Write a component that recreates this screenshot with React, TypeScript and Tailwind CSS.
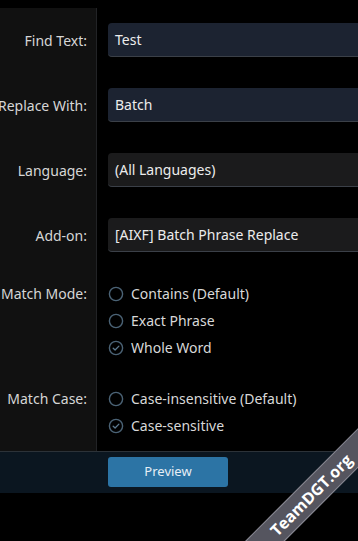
import React from 'react';

function RadioIcon({ checked }: { checked: boolean }) {
  return (
    <svg width="16" height="16" viewBox="0 0 16 16" className="shrink-0">
      <circle cx="8" cy="8" r="6.6" fill="none" stroke="#4b6376" strokeWidth="1.4" />
      {checked && (
        <path d="M5.2 8.2 L7.1 10 L10.9 6.1" fill="none" stroke="#5d7a90" strokeWidth="1.3" strokeLinecap="round" strokeLinejoin="round" />
      )}
    </svg>
  );
}

function Row({ label, children, top = false, className = '' }: { label: string; children: React.ReactNode; top?: boolean; className?: string }) {
  return (
    <div className="flex">
      <div className={`w-[97px] shrink-0 bg-[#111111] border-r border-[#222326] pr-[9px] flex justify-end whitespace-nowrap overflow-hidden ${top ? 'items-start' : 'items-center'} ${className}`}>
        <span className={`text-[14px] text-[#d6d6d6] ${top ? 'leading-[27px]' : ''}`}>{label}</span>
      </div>
      <div className={`flex-1 pl-[11px] min-w-0 ${className}`}>{children}</div>
    </div>
  );
}

function Field({ value, tone }: { value: string; tone: 'blue' | 'gray' }) {
  return (
    <div
      className={`h-[34px] w-[270px] rounded-[4px] border-b border-[#3b4048] flex items-center pl-[7px] text-[14px] text-[#ececec] ${
        tone === 'blue' ? 'bg-[#1c2331]' : 'bg-[#1b1b1c]'
      }`}
    >
      {value}
    </div>
  );
}

function Radio({ label, checked = false }: { label: string; checked?: boolean }) {
  return (
    <div className="h-[27px] flex items-center gap-[7px]">
      <RadioIcon checked={checked} />
      <span className="text-[14px] text-[#d8d8d8]">{label}</span>
    </div>
  );
}

export default function App() {
  return (
    <div className="relative w-[358px] h-[541px] bg-black overflow-hidden" style={{ fontFamily: '"Noto Sans", "Open Sans", sans-serif' }}>
      <div className="h-[8px]" />

      <Row label="Find Text:" className="py-[15px] h-[65px]">
        <Field value="Test" tone="blue" />
      </Row>
      <Row label="Replace With:" className="py-[15px] h-[65px]">
        <Field value="Batch" tone="blue" />
      </Row>
      <Row label="Language:" className="py-[15px] h-[65px]">
        <Field value="(All Languages)" tone="gray" />
      </Row>
      <Row label="Add-on:" className="py-[15px] h-[65px]">
        <Field value="[AIXF] Batch Phrase Replace" tone="gray" />
      </Row>

      <Row label="Match Mode:" top className="py-[12px]">
        <Radio label="Contains (Default)" />
        <Radio label="Exact Phrase" />
        <Radio label="Whole Word" checked />
      </Row>
      <Row label="Match Case:" top className="py-[12px]">
        <Radio label="Case-insensitive (Default)" />
        <Radio label="Case-sensitive" checked />
      </Row>

      {/* footer */}
      <div className="border-t border-[#2c3238] bg-[#0b1620] pt-[5px] pb-[6px] pl-[108px]">
        <button className="w-[120px] h-[30px] rounded-[3px] bg-[#2c74a5] text-[13px] text-[#e6eef5]">
          Preview
        </button>
      </div>

      {/* watermark */}
      <div className="absolute left-[191px] top-[481px] w-[240px] h-[28px] -rotate-45 bg-[#55555f] border-y border-[#8a8a94] flex items-center justify-center">
        <span className="text-[16px] font-bold text-white" style={{ fontFamily: '"Open Sans", sans-serif' }}>TeamDGT.org</span>
      </div>
    </div>
  );
}
